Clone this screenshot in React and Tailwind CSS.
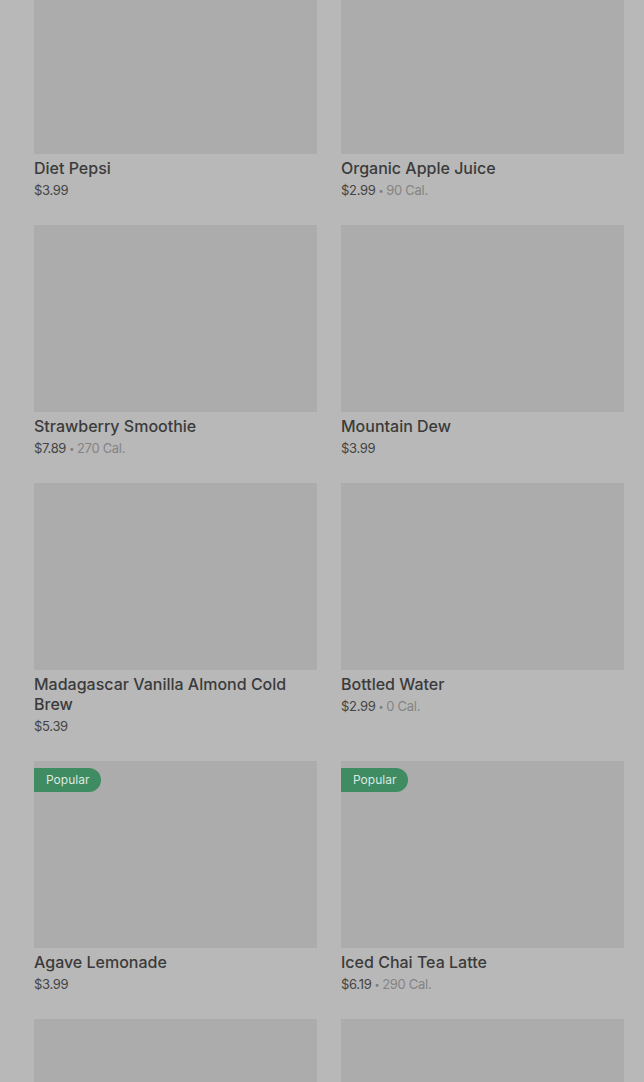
import React from 'react';

const ITEMS = [
    { name: "Diet Pepsi", price: "$3.99", popular: true },
    { name: "Organic Apple Juice", price: "$2.99", cal: "90 Cal." },
    { name: "Strawberry Smoothie", price: "$7.89", cal: "270 Cal." },
    { name: "Mountain Dew", price: "$3.99" },
    { name: "Madagascar Vanilla Almond Cold Brew", price: "$5.39" },
    { name: "Bottled Water", price: "$2.99", cal: "0 Cal." },
    { name: "Agave Lemonade", price: "$3.99", popular: true },
    { name: "Iced Chai Tea Latte", price: "$6.19", cal: "290 Cal.", popular: true },
    { name: null },
    { name: null },
];

function ItemCard({ item }) {
    return (
        <div className="flex flex-col">
            <div className="relative h-[187px] bg-[#acacac]">
                {item.popular && (
                    <span className="absolute left-0 top-[7px] h-[24px] px-3 flex items-center rounded-r-full bg-[#3f8b62] text-[12px] text-[#dce9e1]">
                        Popular
                    </span>
                )}
            </div>
            {item.name && (
                <>
                    <p className="mt-1 text-[16px] leading-5 font-medium text-[#3b3b3b]">{item.name}</p>
                    <p className="mt-[2px] h-5 text-[13px] leading-5 tracking-[-0.3px] text-[#444]">
                        {item.price}
                        {item.cal && (
                            <>
                                <span className="relative -top-[1px] text-[9px] leading-none text-[#7c7c7c] mx-[3px]">•</span>
                                <span className="text-[#848484]">{item.cal}</span>
                            </>
                        )}
                    </p>
                </>
            )}
        </div>
    );
}

export default function App() {
    return (
        <div className="h-[1082px] overflow-hidden bg-[#b8b8b8]" style={{ fontFamily: 'Inter, "Noto Sans", sans-serif' }}>
            <div className="-mt-[33px] pl-[34px] pr-[20px] grid grid-cols-2 gap-x-6 gap-y-[25px]">
                {ITEMS.map((item, i) => (
                    <ItemCard key={i} item={item} />
                ))}
            </div>
        </div>
    );
}
